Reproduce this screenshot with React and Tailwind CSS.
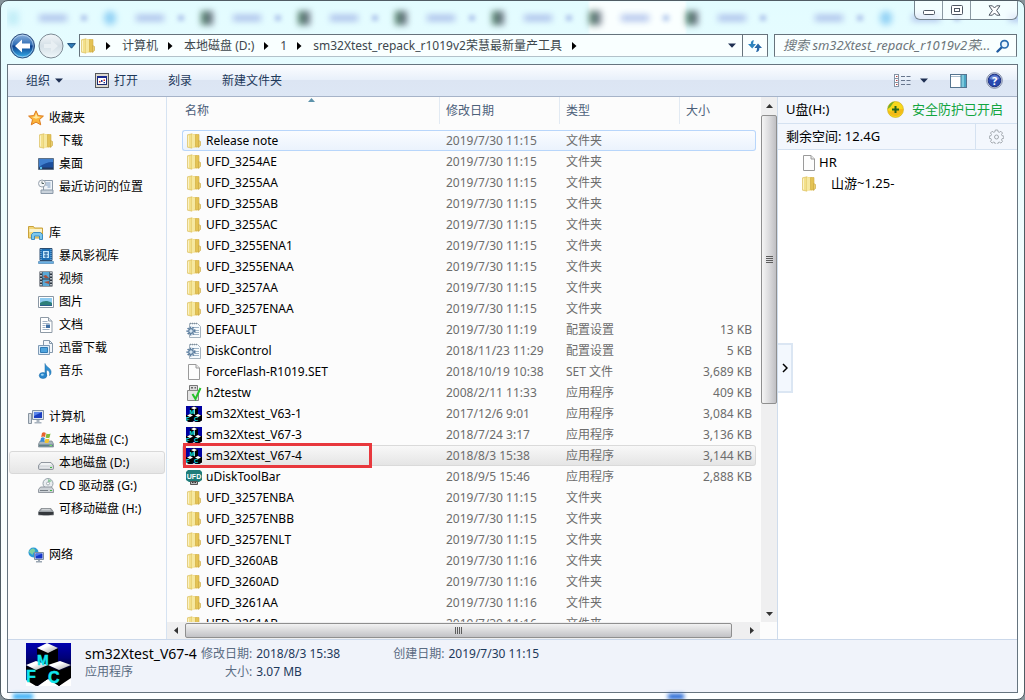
import React, { useState } from "react";
import clsx from "clsx";

const FOLDER = "文件夹";
const APP = "应用程序";

const files = [
  { name: "Release note", date: "2019/7/30 11:15", type: FOLDER, icon: "folder" },
  { name: "UFD_3254AE", date: "2019/7/30 11:15", type: FOLDER, icon: "folder" },
  { name: "UFD_3255AA", date: "2019/7/30 11:15", type: FOLDER, icon: "folder" },
  { name: "UFD_3255AB", date: "2019/7/30 11:15", type: FOLDER, icon: "folder" },
  { name: "UFD_3255AC", date: "2019/7/30 11:15", type: FOLDER, icon: "folder" },
  { name: "UFD_3255ENA1", date: "2019/7/30 11:15", type: FOLDER, icon: "folder" },
  { name: "UFD_3255ENAA", date: "2019/7/30 11:15", type: FOLDER, icon: "folder" },
  { name: "UFD_3257AA", date: "2019/7/30 11:15", type: FOLDER, icon: "folder" },
  { name: "UFD_3257ENAA", date: "2019/7/30 11:15", type: FOLDER, icon: "folder" },
  { name: "DEFAULT", date: "2019/7/30 11:19", type: "配置设置", size: "13 KB", icon: "config" },
  { name: "DiskControl", date: "2018/11/23 11:29", type: "配置设置", size: "5 KB", icon: "config" },
  { name: "ForceFlash-R1019.SET", date: "2018/10/19 10:38", type: "SET 文件", size: "3,689 KB", icon: "file" },
  { name: "h2testw", date: "2008/2/11 11:33", type: APP, size: "409 KB", icon: "usbcheck" },
  { name: "sm32Xtest_V63-1", date: "2017/12/6 9:01", type: APP, size: "3,084 KB", icon: "mfc" },
  { name: "sm32Xtest_V67-3", date: "2018/7/24 3:17", type: APP, size: "3,136 KB", icon: "mfc" },
  { name: "sm32Xtest_V67-4", date: "2018/8/3 15:38", type: APP, size: "3,144 KB", icon: "mfc", marked: true },
  { name: "uDiskToolBar", date: "2018/9/5 15:46", type: APP, size: "2,888 KB", icon: "ufd" },
  { name: "UFD_3257ENBA", date: "2019/7/30 11:15", type: FOLDER, icon: "folder" },
  { name: "UFD_3257ENBB", date: "2019/7/30 11:15", type: FOLDER, icon: "folder" },
  { name: "UFD_3257ENLT", date: "2019/7/30 11:15", type: FOLDER, icon: "folder" },
  { name: "UFD_3260AB", date: "2019/7/30 11:16", type: FOLDER, icon: "folder" },
  { name: "UFD_3260AD", date: "2019/7/30 11:16", type: FOLDER, icon: "folder" },
  { name: "UFD_3261AA", date: "2019/7/30 11:16", type: FOLDER, icon: "folder" },
  { name: "UFD_3261AB", date: "2019/7/30 11:16", type: FOLDER, icon: "folder" },
];

const navGroups = [
  {
    label: "收藏夹",
    icon: "star",
    items: [
      { label: "下载", icon: "folder" },
      { label: "桌面", icon: "desktop" },
      { label: "最近访问的位置", icon: "recent" },
    ],
  },
  {
    label: "库",
    icon: "library",
    items: [
      { label: "暴风影视库", icon: "storm" },
      { label: "视频", icon: "video" },
      { label: "图片", icon: "picture" },
      { label: "文档", icon: "document" },
      { label: "迅雷下载", icon: "thunder" },
      { label: "音乐", icon: "music" },
    ],
  },
  {
    label: "计算机",
    icon: "computer",
    items: [
      { label: "本地磁盘 (C:)", icon: "diskC" },
      { label: "本地磁盘 (D:)", icon: "disk" },
      { label: "CD 驱动器 (G:)", icon: "cd" },
      { label: "可移动磁盘 (H:)", icon: "removable" },
    ],
  },
  { label: "网络", icon: "network", items: [] },
];

const crumbs = ["计算机", "本地磁盘 (D:)", "1", "sm32Xtest_repack_r1019v2荣慧最新量产工具"];

const glassTabs = ["faint", "blue", "green", "green", "green", "green", "active", "green", "none", "blue", "none"];

export default function App() {
  const [selected, setSelected] = useState("sm32Xtest_V67-4");
  const [drive, setDrive] = useState("本地磁盘 (D:)");

  return (
    <div className="h-screen bg-[#87949b] font-['Noto_Sans','Noto_Sans_CJK_SC',sans-serif] text-xs text-black">
      <div className="relative flex h-full flex-col overflow-hidden rounded-lg border border-[#505c64] bg-linear-to-b from-[#e3fcff] via-[#f6feff] to-[#fdffff] px-1.5 pb-1.5">
        <TitleBar />
        <AddressRow />

        <div className="flex min-h-0 flex-1 flex-col border border-[#66747f] bg-white">
          <Toolbar />
          <div className="flex min-h-0 flex-1">
            <Sidebar active={drive} onPick={setDrive} />
            <FileList selected={selected} onSelect={setSelected} />
            <DrivePanel />
          </div>
          <DetailsBar />
        </div>

        <div className="absolute bottom-0 left-3 h-[5px] w-5 bg-[#1fa4f5] blur-[2px]" />
        <div className="absolute right-[340px] bottom-0 h-[5px] w-4 bg-[#0c56cf] blur-[2px]" />
      </div>
    </div>
  );
}

/* ---------- WINDOW CHROME ---------- */

const TitleBar = () => (
  <header className="relative h-[33px] shrink-0">
    <div className="flex h-full overflow-hidden" aria-hidden="true">
      {glassTabs.map((kind, i) => (
        <div
          key={i}
          className={clsx("flex w-[97px] shrink-0 items-center", kind === "active" && "bg-white/80 blur-[1px]")}
        >
          <span
            className={clsx(
              "h-3.5 w-3 blur-[3px]",
              (kind === "green" || kind === "active") && "bg-linear-to-r from-[#4f8468] to-[#6d6f86]",
              kind === "blue" && "rounded-full bg-[#93d2f5]",
              kind === "faint" && "bg-[#c4eef8]",
            )}
          />
          <span className="ml-5 h-1.5 w-7 bg-[#a9bdea] blur-[3px]" />
          <span className="ml-3.5 h-1.5 w-1.5 bg-[#b1c8ec] blur-[2px]" />
        </div>
      ))}
    </div>

    <div className="absolute top-0 right-0 flex h-[19px] rounded-b-md border border-t-0 border-[#76858f] bg-white/60">
      <button aria-label="最小化" className="flex w-7 items-center justify-center border-r border-[#8b99a3]">
        <svg width="12" height="6" viewBox="0 0 12 6" className="mt-1.5">
          <rect x="0.5" y="0.5" width="11" height="4" rx="1" fill="#fff" stroke="#4e5763" />
        </svg>
      </button>
      <button aria-label="最大化" className="flex w-7 items-center justify-center border-r border-[#8b99a3]">
        <svg width="12" height="10" viewBox="0 0 12 10">
          <rect x="0.5" y="0.5" width="11" height="9" rx="1" fill="#fff" stroke="#4e5763" />
          <rect x="3.5" y="3.5" width="5" height="3" fill="#fff" stroke="#4e5763" />
        </svg>
      </button>
      <button aria-label="关闭" className="flex w-[46px] items-center justify-center">
        <svg width="13" height="11" viewBox="0 0 13 11">
          <path
            d="M1 .8h3.4L6.5 3 8.6.8H12L8.6 5.5l3.4 4.7H8.6L6.5 8l-2.1 2.2H1l3.4-4.7z"
            fill="#fff"
            stroke="#4e5763"
            strokeLinejoin="round"
          />
        </svg>
      </button>
    </div>
  </header>
);

const AddressRow = () => (
  <div className="flex h-[30px] shrink-0 items-start pr-px">
    <div className="flex h-6 items-center">
      <button aria-label="后退" className="pl-0.5">
        <svg width="27" height="26" viewBox="0 0 27 26">
          <defs>
            <linearGradient id="back" x1="0" y1="0" x2="0" y2="1">
              <stop offset="0" stopColor="#8fb4df" />
              <stop offset=".45" stopColor="#2f6cb4" />
              <stop offset=".5" stopColor="#0c3f8e" />
              <stop offset="1" stopColor="#39b4ee" />
            </linearGradient>
          </defs>
          <circle cx="13.5" cy="13" r="12" fill="url(#back)" stroke="#33507c" />
          <circle cx="13.5" cy="13" r="10.8" fill="none" stroke="#cfe4f8" strokeOpacity=".6" />
          <path d="M6 13l7-6.5v4h8v5h-8v4z" fill="#fff" />
        </svg>
      </button>
      <button aria-label="前进" className="pl-0.5">
        <svg width="26" height="26" viewBox="0 0 26 26">
          <defs>
            <linearGradient id="fwd" x1="0" y1="0" x2="0" y2="1">
              <stop offset="0" stopColor="#f3f7fa" />
              <stop offset=".5" stopColor="#d4dfe6" />
              <stop offset="1" stopColor="#f0f8fb" />
            </linearGradient>
          </defs>
          <circle cx="13" cy="13" r="12" fill="url(#fwd)" stroke="#7c8a94" />
          <path d="M20 13l-7-6v4H6v4h7v4z" fill="#e8eff3" />
        </svg>
      </button>
      <button aria-label="最近浏览" className="px-[3px]">
        <svg width="9" height="6" viewBox="0 0 9 6">
          <path d="M.6.6h7.8L4.5 5.2z" fill="#2f7db8" stroke="#1d4f7d" />
        </svg>
      </button>
    </div>

    <nav className="flex h-[23px] flex-1 items-center border border-[#66737c] border-b-[#b3c2ca] bg-[#f9ffff] text-[#3d474d]">
      <Icon name="folder" />
      <CrumbArrow />
      {crumbs.map((c) => (
        <React.Fragment key={c}>
          <a href="#">{c}</a>
          <CrumbArrow />
        </React.Fragment>
      ))}
      <button aria-label="上一个位置" className="ml-auto px-1.5">
        <Caret />
      </button>
    </nav>
    <button
      aria-label="刷新"
      className="flex h-[23px] w-[25px] items-center justify-center border border-l-0 border-[#66737c] border-b-[#b3c2ca] bg-[#f9ffff]"
    >
      <svg width="16" height="14" viewBox="0 0 16 14">
        <path d="M7 1.2C4.6 1.2 3.8 2.6 3.8 5H1l4.2 4.5L9 5H6.2c0-1.6.2-2.4.8-3.8z" fill="#2d84bf" />
        <path d="M9 13c2.4 0 3.4-1.4 3.4-4H15l-4-4.5L7.4 9H10c0 1.6-.2 2.6-1 4z" fill="#2767a8" />
      </svg>
    </button>

    <div className="ml-1.5 flex h-[23px] w-[243px] items-center border border-[#66737c] border-b-[#b3c2ca] bg-[#f9ffff]">
      <input
        type="text"
        aria-label="搜索"
        placeholder="搜索 sm32Xtest_repack_r1019v2荣..."
        className="min-w-0 flex-1 bg-transparent pl-2 text-[13px] italic outline-none placeholder:text-[#6d767b]"
      />
      <svg width="14" height="14" viewBox="0 0 14 14" className="mr-1.5 shrink-0">
        <path d="M1.5 12.5l4-4" stroke="#1f5aa0" strokeWidth="2.4" strokeLinecap="round" />
        <circle cx="8.5" cy="5.3" r="3.7" fill="#e9f5fd" stroke="#2b6cb0" strokeWidth="1.7" />
      </svg>
    </div>
  </div>
);

const CrumbArrow = () => (
  <svg width="6" height="8" viewBox="0 0 6 8" className="mx-[10px] shrink-0">
    <path d="M0 0l4.5 4L0 8z" fill="#000" />
  </svg>
);

const Caret = () => (
  <svg width="8" height="5" viewBox="0 0 8 5">
    <path d="M0 .5h8L4 4.8z" fill="#1e2f52" />
  </svg>
);

const Toolbar = () => (
  <div className="flex h-8 shrink-0 items-center border-b border-[#a6b3c8] bg-[linear-gradient(#fcfdff,#e8f0fa_48%,#dce5f3_50%,#dde7f5)] pr-[14px] pl-[18px] text-[#1e395b]">
    <button className="flex items-center gap-[5px]">
      组织 <Caret />
    </button>
    <button className="ml-8 flex items-center gap-[5px]">
      <svg width="14" height="15" viewBox="0 0 14 15">
        <rect x=".5" y=".5" width="13" height="14" fill="#ddd9cf" stroke="#55585c" />
        <rect x="2.5" y="3.5" width="9" height="8" fill="#fff" stroke="#1a2a70" />
        <path d="M2 3h10v2H2z" fill="#1a2a90" />
        <path d="M4 8h1.5v1.5H4zM8.5 6.5H10V8H8.5z" fill="#c22" />
        <path d="M6 7h1.5v2H6zM8.500 9h1.5v1.2H8.500z" fill="#223a90" />
      </svg>
      打开
    </button>
    <button className="ml-[30px]">刻录</button>
    <button className="ml-[30px]">新建文件夹</button>

    <button aria-label="更改视图" className="ml-auto flex items-center gap-[9px]">
      <svg width="17" height="14" viewBox="0 0 17 14">
        {[1, 5, 9].map((y) => (
          <g key={y}>
            <rect x=".5" y={y - 0.5} width="4" height="4" fill="#fff" stroke="#8693a5" />
            <path d={`M2 ${y + 1.5}h1.5`} stroke="#b04040" />
            <path d={`M7 ${y + 1.5}h4M12.5 ${y + 1.5}h4`} stroke="#66758c" />
          </g>
        ))}
      </svg>
      <Caret />
    </button>
    <button aria-label="预览窗格" className="ml-[22px]">
      <svg width="17" height="14" viewBox="0 0 17 14">
        <rect x=".5" y=".5" width="16" height="13" fill="#fff" stroke="#55748f" />
        <path d="M1 2.5h10" stroke="#a8bccd" />
        <rect x="11" y="1" width="5" height="12" fill="#7cc8dc" />
        <path d="M14 1h2v12h-2z" fill="#4aa5c4" />
        <path d="M11 1v12" stroke="#3a7a98" />
      </svg>
    </button>
    <button aria-label="帮助" className="ml-[19px]">
      <svg width="17" height="17" viewBox="0 0 17 17">
        <circle cx="8.5" cy="8.5" r="7.8" fill="#d9dee9" stroke="#7b87a5" />
        <circle cx="8.5" cy="8.5" r="6.3" fill="#2748b0" stroke="#1b2f80" />
        <path d="M3.5 7a5.2 5.2 0 0110 0c-3 1.2-7 1.2-10 0z" fill="#7f9be0" fillOpacity=".7" />
        <text x="8.5" y="12.5" textAnchor="middle" fontSize="11" fontWeight="700" fill="#fff">
          ?
        </text>
      </svg>
    </button>
  </div>
);

/* ---------- NAVIGATION PANE ---------- */

const Sidebar = ({ active, onPick }) => (
  <aside className="flex w-[159px] shrink-0 flex-col gap-[23px] overflow-hidden border-r border-[#d6e3f2] bg-[#fcfcfc] pt-[9px]">
    {navGroups.map((group) => (
      <section key={group.label}>
        <button className="flex h-[23px] items-center gap-[5px] pl-5">
          <Icon name={group.icon} />
          {group.label}
        </button>
        <ul className="px-px">
          {group.items.map((item) => (
            <li key={item.label}>
              <button
                onClick={() => onPick(item.label)}
                className={clsx(
                  "flex h-[23px] w-full items-center gap-[5px] rounded-[3px] border pl-7 text-left whitespace-nowrap",
                  active === item.label
                    ? "border-[#d9d9d9] bg-linear-to-b from-[#f8f8f8] to-[#e6e6e6]"
                    : "border-transparent",
                )}
              >
                <Icon name={item.icon} />
                {item.label}
              </button>
            </li>
          ))}
        </ul>
      </section>
    ))}
  </aside>
);

/* ---------- FILE LIST ---------- */

const FileList = ({ selected, onSelect }) => (
  <main className="flex min-w-0 flex-1 flex-col bg-[#fcfcfc]">
    <div className="flex min-h-0 flex-1">
      <div className="min-w-0 flex-1 overflow-hidden pr-[5px] pl-[15px]">
        <table className="w-full table-fixed border-separate border-spacing-0 text-left">
          <thead className="text-[#4c607a]">
            <tr>
              <HeadCell className="pl-[3px]" sorted>
                名称
              </HeadCell>
              <HeadCell className="w-[120px] pl-[6px]">修改日期</HeadCell>
              <HeadCell className="w-[120px] pl-[6px]">类型</HeadCell>
              <HeadCell className="w-[76px] pl-[6px]" last>
                大小
              </HeadCell>
            </tr>
          </thead>
          <tbody>
            {files.map((file, i) => (
              <FileRow
                key={file.name}
                file={file}
                hot={i === 0}
                selected={selected === file.name}
                onClick={() => onSelect(file.name)}
              />
            ))}
          </tbody>
        </table>
      </div>
      <VerticalScroll />
    </div>
    <HorizontalScroll />
  </main>
);

const HeadCell = ({ children, className, sorted, last }) => (
  <th className={clsx("relative h-[33px] p-0 align-top font-normal", className)}>
    <div className={clsx("flex h-[27px] items-center", !last && "border-r border-[#e2eaf3]")}>{children}</div>
    {sorted && (
      <svg width="7" height="4" viewBox="0 0 7 4" className="absolute inset-x-0 top-px mx-auto">
        <path d="M3.5 0L7 4H0z" fill="#5d93ab" />
      </svg>
    )}
  </th>
);

const FileRow = ({ file, hot, selected, onClick }) => {
  const cell = clsx(
    "h-[21px] border-y p-0 leading-[19px] whitespace-nowrap",
    selected && "border-[#dadada] bg-linear-to-b from-[#f8f8f8] to-[#e5e5e5]",
    hot && !selected && "border-[#b8d6fb] bg-linear-to-b from-[#fafcff] to-[#ebf3fd]",
    !hot && !selected && "border-transparent",
  );

  return (
    <tr onClick={onClick} className="text-[#6d6d6d]">
      <td className={clsx(cell, "relative rounded-l-[3px] border-l pl-[3px]! text-black")}>
        <div className="flex items-center gap-1">
          <Icon name={file.icon} />
          {file.name}
        </div>
        {file.marked && (
          <span className="pointer-events-none absolute -top-[3px] left-0 h-[25px] w-[189px] border-3 border-[#e8383d]" />
        )}
      </td>
      <td className={clsx(cell, "pl-[6px]!")}>{file.date}</td>
      <td className={clsx(cell, "pl-[6px]!")}>{file.type}</td>
      <td className={clsx(cell, "rounded-r-[3px] border-r pr-[3px]! text-right")}>{file.size}</td>
    </tr>
  );
};

const VerticalScroll = () => (
  <div className="flex w-4 shrink-0 flex-col bg-[#efeff0]">
    <button aria-label="向上滚动" className="flex h-[18px] items-center justify-center">
      <svg width="7" height="4" viewBox="0 0 7 4">
        <path d="M3.5 0L7 4H0z" fill="#333" />
      </svg>
    </button>
    <div className="min-h-0 flex-1">
      <div className="flex h-[59%] flex-col items-center justify-center gap-px rounded-[2px] border border-[#8f8f8f] bg-linear-to-r from-[#f5f5f5] via-[#dcdcde] to-[#bfbfc3]">
        {[0, 1, 2, 3].map((n) => (
          <span key={n} className="h-px w-[7px] bg-[#5d5d5d]" />
        ))}
      </div>
    </div>
    <button aria-label="向下滚动" className="flex h-[17px] items-center justify-center">
      <svg width="7" height="4" viewBox="0 0 7 4">
        <path d="M0 0h7L3.5 4z" fill="#333" />
      </svg>
    </button>
  </div>
);

const HorizontalScroll = () => (
  <div className="flex h-[17px] shrink-0 pr-[17px]">
    <div className="flex flex-1 bg-[#efeff0]">
      <button aria-label="向左滚动" className="flex w-[18px] items-center justify-center">
        <svg width="4" height="7" viewBox="0 0 4 7">
          <path d="M4 0v7L0 3.5z" fill="#333" />
        </svg>
      </button>
      <div className="min-w-0 flex-1 pt-px">
        <div className="flex h-[15px] w-[98%] items-center justify-center gap-px rounded-[2px] border border-[#8f8f8f] bg-linear-to-b from-[#f2f2f2] via-[#dadadc] to-[#c2c2c6]">
          {[0, 1, 2, 3].map((n) => (
            <span key={n} className="h-[7px] w-px bg-[#5d5d5d]" />
          ))}
        </div>
      </div>
      <button aria-label="向右滚动" className="flex w-[17px] items-center justify-center">
        <svg width="4" height="7" viewBox="0 0 4 7">
          <path d="M0 0v7l4-3.5z" fill="#333" />
        </svg>
      </button>
    </div>
  </div>
);

/* ---------- USB DRIVE PANEL ---------- */

const DrivePanel = () => (
  <aside className="relative w-[240px] shrink-0 border-l border-[#cfdcec] bg-white text-[13px]">
    <div className="flex h-[27px] items-center justify-between border-b border-[#d5e2f1] bg-[#f3f7fd] pr-[14px] pl-2">
      <span>U盘(H:)</span>
      <span className="flex items-center gap-2 text-[#12a53f]">
        <svg width="17" height="17" viewBox="0 0 17 17">
          <circle cx="8.5" cy="8.5" r="8" fill="#f8d81c" stroke="#c9a81a" strokeWidth=".6" />
          <path d="M.8 9.5C4 12 7 9 8.5 8.500S13 8 16.300 8A8 8 0 01.8 9.5z" fill="#f0a818" fillOpacity=".6" />
          <path d="M.6 8A8 8 0 018 .6C4.500 2.500 5 6 .6 8z" fill="#4fa52a" fillOpacity=".8" />
          <path d="M8.500 5v7M5 8.500h7" stroke="#23631d" strokeWidth="2" />
        </svg>
        安全防护已开启
      </span>
    </div>
    <div className="flex h-[26px] items-center border-b border-[#d5e2f1] bg-[#f3f7fd] pl-2">
      <span>剩余空间: 12.4G</span>
      <button
        aria-label="设置"
        className="ml-auto flex h-full w-[42px] items-center justify-center border-l border-[#d5e2f1]"
      >
        <svg width="15" height="15" viewBox="0 0 15 15" fill="none" stroke="#a3a9af">
          <path
            strokeLinejoin="round"
            d="M6.3 1h2.4l.4 1.8 1.2.5 1.6-1 1.6 1.7-1 1.5.5 1.2 1.8.4v2.2l-1.8.4-.5 1.2 1 1.5-1.6 1.7-1.6-1-1.2.5-.4 1.8H6.3l-.4-1.8-1.2-.5-1.6 1-1.6-1.7 1-1.500L2 9.700.3 9.300V7.100L2 6.700l.5-1.200-1-1.500 1.600-1.700 1.600 1 1.200-.5z"
          />
          <circle cx="7.5" cy="8" r="2" />
        </svg>
      </button>
    </div>
    <ul className="pt-[2px]">
      <li className="flex h-[21px] items-center gap-0.5 pl-[23px]">
        <Icon name="file" /> HR
      </li>
      <li className="flex h-[21px] items-center gap-[14px] pl-[23px]">
        <Icon name="folder" /> 山游~1.25-
      </li>
    </ul>
    <button
      aria-label="收起"
      className="absolute top-[246px] left-0 flex h-[50px] w-[15px] items-center justify-center border-2 border-l-0 border-[#dbe6f3] bg-[#f3f8fe]"
    >
      <svg width="6" height="10" viewBox="0 0 6 10" fill="none">
        <path d="M1 1l4 4-4 4" stroke="#000" strokeWidth="1.5" />
      </svg>
    </button>
  </aside>
);

/* ---------- DETAILS ---------- */

const DetailsBar = () => (
  <footer className="flex h-[53px] shrink-0 items-start border-t border-[#cbd8ea] bg-[#f0f3fa] pt-[3px] pl-[18px]">
    <MfcIcon />
    <div className="ml-3.5 flex w-[110px] flex-col pt-0.5 leading-[18px] whitespace-nowrap">
      <span className="text-sm leading-[18px]">sm32Xtest_V67-4</span>
      <span className="text-[#5a6b82]">应用程序</span>
    </div>
    <dl className="ml-1.5 grid grid-cols-[auto_133px_auto_auto] gap-x-1 pt-0.5 leading-[18px] text-[#1e395b]">
      <dt className="text-right text-[#5a6b82]">修改日期:</dt>
      <dd>2018/8/3 15:38</dd>
      <dt className="text-[#5a6b82]">创建日期:</dt>
      <dd>2019/7/30 11:15</dd>
      <dt className="text-right text-[#5a6b82]">大小:</dt>
      <dd>3.07 MB</dd>
    </dl>
  </footer>
);

/* ---------- ICONS ---------- */

const MfcIcon = () => (
  <svg width="45" height="43" viewBox="0 0 45 43" className="shrink-0">
    <defs>
      <linearGradient id="mfcBg" x1="0" y1="0" x2="0" y2="1">
        <stop offset="0" stopColor="#0000b0" />
        <stop offset=".35" stopColor="#000078" />
        <stop offset=".65" stopColor="#000018" />
      </linearGradient>
      <linearGradient id="mfcTop" x1="0" y1="0" x2="1" y2="1">
        <stop offset=".4" stopColor="#fff" />
        <stop offset="1" stopColor="#9a9a9a" />
      </linearGradient>
    </defs>
    <path d="M0 0h45v43H0z" fill="url(#mfcBg)" />
    <path d="M0 35l11 8H0zM45 33l-12 10h12zM12 43l11-8 10 8z" fill="#fff" />
    <path d="M11 5l11 4v15l-11-3zM22 9l10-4v16l-10 3z" fill="#000" />
    <path d="M11 5L21 0l11 5-10 5z" fill="url(#mfcTop)" />
    <path d="M0 23l10 4v16L0 37zM10 27l12-5v14l-12 7z" fill="#000" />
    <path d="M0 22l10-4 12 4-12 5z" fill="url(#mfcTop)" />
    <path d="M22 23l11 5v15l-11-7zM33 28l12-5v12l-12 8z" fill="#000" />
    <path d="M22 22l12-4 11 4-12 5z" fill="url(#mfcTop)" />
    <g fill="#12e6ee" stroke="#12e6ee" strokeWidth=".5" fontFamily="Liberation Sans" fontWeight="700">
      <text x="11" y="22" fontSize="14">
        M
      </text>
      <text x="0" y="39" fontSize="16">
        F
      </text>
      <text x="22" y="40" fontSize="16">
        C
      </text>
    </g>
  </svg>
);

const shapes = {
  folder: (
    <>
      <path d="M1.5 1.8l4.5-1v14.4l-4.5-1z" fill="#f3e08a" stroke="#d8bb58" strokeWidth=".6" />
      <path d="M6 .8l5 .7v13H6z" fill="#edd273" />
      <path d="M6 1l3.5 1v11L6 15.2z" fill="#f6e8a0" />
      <path d="M9.5 1.5H13v12.8l-3.5-.8z" fill="#e4c355" stroke="#d0ac45" strokeWidth=".6" />
      <path d="M12.5 7.5l2 1v4l-2 1.5z" fill="#e9cf70" stroke="#c9a43c" strokeWidth=".6" />
      <path d="M2.5 2.5v11" stroke="#fbf2c4" />
    </>
  ),
  file: (
    <>
      <path d="M2.5.5H10L13.5 4v11.5h-11z" fill="#fdfdfd" stroke="#9a9a9a" />
      <path d="M10 .5V4h3.5" fill="#e9e9e9" stroke="#9a9a9a" />
    </>
  ),
  config: (
    <>
      <path d="M3.5 1.5h8l3 3v11h-11z" fill="#f6fafd" stroke="#a5b3bf" />
      <path d="M4 1.5h8" stroke="#7d8d9a" strokeDasharray="1 1" strokeWidth="1.5" />
      <path d="M6 5.5h7M8 8.5h5M9 10.5h4M8 12.5h5" stroke="#9fb4c6" />
      <circle cx="5" cy="9" r="3.8" fill="none" stroke="#56799c" strokeWidth="1.5" strokeDasharray="1.5 1.2" />
      <circle cx="5" cy="9" r="2.3" fill="#d6e5f1" stroke="#56799c" strokeWidth="1.2" />
    </>
  ),
  usbcheck: (
    <>
      <path d="M3.5.5h8v5h-8z" fill="#dcdcdc" stroke="#777" />
      <path d="M5 2h2v1.5H5zM8.5 2H10v1.5H8.5z" fill="#666" />
      <path d="M1.5 5.5h11v10h-11z" fill="#e5e5e5" stroke="#888" />
      <path d="M6.5 9l3 5 5-11" fill="none" stroke="#25c22a" strokeWidth="2" />
    </>
  ),
  mfc: (
    <>
      <path d="M0 0h16v16H0z" fill="#0000a0" />
      <path d="M0 9h16v7H0z" fill="#00002c" />
      <path d="M4 2l4-2 4 2v6l4 1.500v5L12 16l-4-2-4 2-4-2V9.500L4 8z" fill="#000" />
      <path d="M5 2l3-1.500L11 2 8 3.500zM1 9.500L4 8l3 1.500L4 11zM9 9.500L12 8l3 1.500-3 1.500z" fill="#fff" />
      <path d="M8 3.500L9 3v5l-1 .5z" fill="#d5d5d5" />
      <path d="M0 14.500L2.500 16H0zM16 14.500L13.500 16H16zM6.500 16L8 15l1.500 1z" fill="#fff" />
      <g fill="#14e4ec" fontFamily="Liberation Sans" fontWeight="700" fontSize="6">
        <text x="3.5" y="8">
          M
        </text>
        <text x="0" y="14.5">
          F
        </text>
        <text x="8" y="15">
          C
        </text>
      </g>
    </>
  ),
  ufd: (
    <>
      <path d="M2 1h12l2 2v8l-3 2H3l-3-2V3z" fill="#1f7d7a" />
      <path d="M4.5 12.5h7v3h-7z" fill="#bbb" stroke="#555" />
      <path d="M6 13.5h1.5M8.5 13.5H10" stroke="#333" />
      <text x="8" y="9.5" textAnchor="middle" fontSize="7" fontWeight="700" fill="#fff" fontFamily="Liberation Sans">
        UFD
      </text>
    </>
  ),
  star: (
    <>
      <path
        d="M8 .8l2.2 4.8 5.200.5-3.900 3.500 1.200 5.200L8 12.100l-4.700 2.700 1.200-5.200L.6 6.100l5.200-.5z"
        fill="#fbb63c"
        stroke="#dd7a1d"
        strokeLinejoin="round"
      />
      <path d="M8 3l1.400 3.500 3.500.4-4.900 1.800L4 7l3-.5z" fill="#ffe9a0" />
    </>
  ),
  desktop: (
    <>
      <path d="M.5 2.5h15v11H.5z" fill="#1d4f9c" stroke="#5e7187" />
      <path d="M1 3h14v3C9 6 5 8 1 11z" fill="#3f7fce" />
      <path d="M1 11.5h14V13H1z" fill="#23395e" />
      <circle cx="3" cy="12" r="1.2" fill="#5cc3ee" />
    </>
  ),
  recent: (
    <>
      <path d="M5.5 1.5h9v10h-9z" fill="#eef3f8" stroke="#8b99a8" />
      <path d="M7.5 4h5M7.5 6h5M9.5 8h3" stroke="#7f9cc0" />
      <path d="M3 11h12v3.5H3z" fill="#c9d2db" stroke="#8b99a8" />
      <circle cx="4" cy="4.5" r="3.5" fill="#f4f6f8" stroke="#98a3ae" />
      <path d="M4 2.5v2h2" fill="none" stroke="#566" />
    </>
  ),
  library: (
    <>
      <path d="M.5 1.5h5l1 1.5h8v10H.5z" fill="#f2d77a" stroke="#c9a23c" />
      <path d="M1.5 4H14v3H1.5z" fill="#fbf3cb" />
      <path d="M3.5 14.5v-5l2-2h7l2 2v5h-3V11h-5v3.5z" fill="#7cc8ee" stroke="#3f8dc0" />
    </>
  ),
  storm: (
    <>
      <path d="M2 .5h12v12H2z" fill="#1c6fb5" stroke="#2c4d70" />
      <path d="M3 1v12M13 1v12" stroke="#8fc4ea" strokeDasharray="1 1" />
      <path d="M5 3h6v7H5z" fill="#bfe4fa" />
      <path d="M6 5h4M6 8h4M8 4v6" stroke="#1c5f9d" />
      <path d="M.5 13.5h15v2H.5z" fill="#69b0e4" stroke="#3f7cad" strokeWidth=".6" />
    </>
  ),
  video: (
    <>
      <path d="M1.5.5h13v15h-13z" fill="#2c3440" />
      <path d="M3 1v14M13 1v14" stroke="#e8eef2" strokeWidth="1.5" strokeDasharray="1.5 1.5" />
      <path d="M4.5 1h7v6.5h-7z" fill="#5aa8d6" />
      <path d="M4.5 8.5h7V15h-7z" fill="#5aa8d6" />
      <path d="M5 5l3-1 3 3H7zM6 11l5-1v3l-3-1z" fill="#a5503c" />
    </>
  ),
  picture: (
    <>
      <path d="M.5 2.5h15v11H.5z" fill="#fff" stroke="#8a97a4" />
      <path d="M2 4h12v8H2z" fill="#8ecbf0" />
      <path d="M2 9c3-2 7-3 12 0v3H2z" fill="#2e7f7a" />
      <path d="M2 11h12v1H2z" fill="#2c5c8c" />
    </>
  ),
  document: (
    <>
      <path d="M2.5.5h8L14 4v11.5H2.5z" fill="#fff" stroke="#8e9aa6" />
      <path d="M10.5.5V4H14" fill="#e3e9ef" stroke="#8e9aa6" />
      <path d="M4.5 4.5h5M4.5 6.5h7M4.5 8.5h3M4.5 10.5h3M4.5 12.5h7" stroke="#a0b2c4" />
      <path d="M8 7.5h4V11H8z" fill="#3f6fa5" />
    </>
  ),
  thunder: (
    <>
      <path d="M5.5.5h6l3 3v9h-9z" fill="#f3f7fb" stroke="#8598ab" />
      <path d="M11.5.5v3h3" fill="none" stroke="#8598ab" />
      <path d="M.5 5.5h11v9H.5z" fill="#dcecf9" stroke="#7f9ab5" />
      <path d="M2.5 7.5h7v5h-7z" fill="#4da3dd" stroke="#2f7bb5" />
    </>
  ),
  music: (
    <>
      <path d="M7 .5c.5 3.5 7 4.5 6 9.500-.3 1.500-1 2.300-1.500 2.500.8-3.500-.5-5-3-5.500v6H7z" fill="#2f8fd0" stroke="#1b68a5" strokeWidth=".5" />
      <ellipse cx="5" cy="12.5" rx="3.8" ry="3" fill="#2a86cc" stroke="#1b68a5" strokeWidth=".5" />
      <ellipse cx="4.3" cy="11.7" rx="1.5" ry="1" fill="#9dd6f5" />
    </>
  ),
  computer: (
    <>
      <path d="M.5 4.5h3v10h-3z" fill="#d5dce3" stroke="#8894a0" />
      <path d="M4.5 1.5h11v9h-11z" fill="#dde5ee" stroke="#8393a5" />
      <path d="M6 3h8v6H6z" fill="#1c3fc0" />
      <path d="M6 3h8L6 7z" fill="#5a86ea" />
      <path d="M8.5 11h3v2h2v1.5h-7V13h2z" fill="#a9b4bf" />
    </>
  ),
  diskC: (
    <>
      <path d="M2 9h12l1.5 3v3H.5v-3z" fill="#a8b5bd" stroke="#75838d" strokeWidth=".7" />
      <path d="M1 12.5h14v2H1z" fill="#5f7f86" />
      <path d="M11.5 13H14v1h-2.5z" fill="#6ee06a" />
      <path d="M4 1c1.500-1 2.500-.8 3.800 0L7 5c-1.300-.8-2.500-.8-3.800 0z" fill="#e8632c" />
      <path d="M8.500 1.500c1.300.8 2.500.8 4 0l-.9 4c-1.400.8-2.700.8-4 0z" fill="#84bc3c" />
      <path d="M3 6c1.500-1 2.500-.8 3.800 0L6 10c-1.300-.8-2.500-.8-3.800 0z" fill="#3a8bd8" />
      <path d="M7.500 6.500c1.300.8 2.500.8 4 0l-.9 4c-1.400.8-2.700.8-4 0z" fill="#f4c430" />
    </>
  ),
  disk: (
    <>
      <path d="M3 7.5h10l2.5 3v3c0 .6-.4 1-1 1h-13c-.6 0-1-.4-1-1v-3z" fill="#c7ccd1" stroke="#7f878f" strokeWidth=".8" />
      <path d="M3.3 8h9.4l1.8 2.5h-13z" fill="#f0f2f4" />
      <path d="M1.5 11.5h13v2h-13z" fill="#e4e7ea" />
      <path d="M12 12h2v1h-2z" fill="#3fba45" />
    </>
  ),
  cd: (
    <>
      <circle cx="10" cy="5.5" r="5" fill="#e9edf0" stroke="#98a3ab" />
      <path d="M10 1v4l4-2z" fill="#8fc8a0" />
      <circle cx="10" cy="5.5" r="1.5" fill="#fff" stroke="#8a959d" strokeWidth=".7" />
      <path d="M2.5 9h11l2 2.5v3H.5v-3z" fill="#cdd2d7" stroke="#7f878f" strokeWidth=".8" />
      <path d="M2 12.5h8" stroke="#777f86" />
      <path d="M12 12h2v1h-2z" fill="#3fba45" />
    </>
  ),
  removable: (
    <>
      <path d="M3 7.5h10l2.5 3.5v3H.5v-3z" fill="#9ca2a7" stroke="#6b7176" strokeWidth=".6" />
      <path d="M.7 11h14.6v2.5c-2 1-12.6 1-14.6 0z" fill="#34383c" />
      <path d="M4 8h8l1 1.5H3z" fill="#cdd1d4" />
    </>
  ),
  network: (
    <>
      <circle cx="5.5" cy="5.5" r="5" fill="#2a9bd8" />
      <path d="M2 3c2-2 4-2 5 0s-2 2-2 4-3-1-4-2z" fill="#7fd0a0" />
      <path d="M6.5 5.5h9v7h-9z" fill="#dfe6ee" stroke="#7f8fa0" />
      <path d="M7.5 6.5h7v5h-7z" fill="#1436c8" />
      <path d="M7.5 6.5h7l-7 3z" fill="#4d78ea" />
      <path d="M10 13h2v1h2v1.5H8V14h2z" fill="#9aa6b2" />
    </>
  ),
};

const Icon = ({ name }) => (
  <svg width="16" height="16" viewBox="0 0 16 16" className="shrink-0">
    {shapes[name]}
  </svg>
);
